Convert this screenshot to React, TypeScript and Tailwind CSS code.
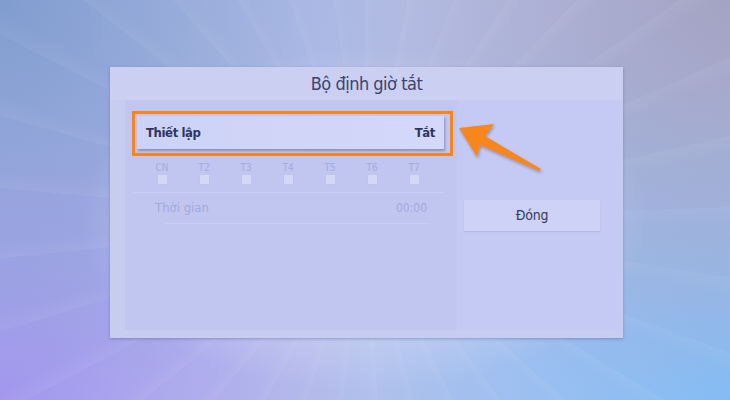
import React from 'react'

const days = ['CN', 'T2', 'T3', 'T4', 'T5', 'T6', 'T7']

const font = { fontFamily: '"DejaVu Sans Condensed", "Noto Sans", sans-serif' }

export default function App() {
  return (
    <div
      className="relative w-[730px] h-[400px] overflow-hidden pt-[67px] pl-[110px] bg-[radial-gradient(ellipse_at_50%_55%,#dfe3f8_0%,rgba(223,227,248,0)_55%),radial-gradient(circle_at_0%_0%,#809ccf_0%,rgba(128,156,207,0)_50%),radial-gradient(circle_at_100%_0%,#a4a3c3_0%,rgba(164,163,195,0)_50%),radial-gradient(circle_at_0%_100%,#a496f0_0%,rgba(164,150,240,0)_45%),radial-gradient(circle_at_100%_100%,#82bdf6_0%,rgba(130,189,246,0)_50%),linear-gradient(#b7c1ea,#b7c1ea)]"
      style={font}
    >
      {/* faint light rays */}
      <div className="absolute inset-0 bg-[repeating-conic-gradient(from_0deg_at_50%_55%,rgba(255,255,255,0.05)_0deg,rgba(255,255,255,0)_3deg,rgba(255,255,255,0)_11deg)]" />

      <div className="relative w-[513px] h-[271px] flex flex-col bg-[#c7cdf1] shadow-[0_1px_3px_rgba(60,70,120,0.35)]">
        {/* title */}
        <div className="h-[33px] flex items-center justify-center bg-[#cbd0f2]">
          <span className="text-[18px] leading-none text-[#3d4370] tracking-[-0.5px]">Bộ định giờ tắt</span>
        </div>

        <div className="flex-1 flex pl-[15px] pr-[1px] pb-[8px]">
          {/* left panel */}
          <div className="w-[332px] bg-[#c0c6ef] pt-[11px] pl-[7px]">
            <div className="w-[321px] h-[45px] border-[3px] border-[#f7841e] pt-[2px] pl-[2px]">
              <div className="w-[307px] h-[33px] flex items-center justify-between pl-[9px] pr-[9px] bg-[linear-gradient(90deg,#ccd2f6,#d4d9fa)] shadow-[1px_2px_2px_rgba(70,80,130,0.45)]">
                <span className="text-[13px] font-bold tracking-[-0.4px] text-[#2f3560]">Thiết lập</span>
                <span className="text-[13px] font-bold tracking-[-0.4px] text-[#2f3560]">Tắt</span>
              </div>
            </div>

            <div className="flex pl-[9px] mt-[6px]">
              {days.map((d) => (
                <div key={d} className="w-[42px] flex flex-col items-center">
                  <span className="text-[10px] leading-[11px] text-[#a4abde]">{d}</span>
                  <div className="mt-[1px] w-[11px] h-[11px] bg-[#d3d8f7] border border-[#bdc4ee]" />
                </div>
              ))}
            </div>

            <div className="mt-[7px] mr-[12px] h-px bg-[#c8cdf3]" />

            <div className="flex items-center justify-between h-[30px] pl-[23px] pr-[30px]">
              <span className="text-[13px] text-[#a3a9dc]">Thời gian</span>
              <span className="text-[12px] text-[#a3a9dc]">00:00</span>
            </div>
            <div className="ml-[33px] mr-[27px] h-px bg-[#c8cdf3]" />
          </div>

          {/* right panel */}
          <div className="flex-1 bg-[#c4caf3] pt-[100px] pl-[7px]">
            <div className="w-[136px] h-[31px] flex items-center justify-center bg-[#cdd2f6] shadow-[0_1px_1px_rgba(90,100,150,0.15)]">
              <span className="text-[14px] tracking-[-0.2px] text-[#353b66]">Đóng</span>
            </div>
          </div>
        </div>
      </div>

      {/* orange arrow pointing at the focused row */}
      <svg className="absolute left-[450px] top-[112px] w-[100px] h-[65px]" viewBox="0 0 100 65">
        <defs>
          <filter id="sh" x="-20%" y="-20%" width="140%" height="140%">
            <feDropShadow dx="1" dy="2" stdDeviation="1.5" floodColor="#5a4a70" floodOpacity="0.45" />
          </filter>
        </defs>
        <polygon
          points="9,16 44,12 35,24 91,57 89,59 30,33 27,45"
          fill="#f7861f"
          filter="url(#sh)"
        />
      </svg>
    </div>
  )
}
